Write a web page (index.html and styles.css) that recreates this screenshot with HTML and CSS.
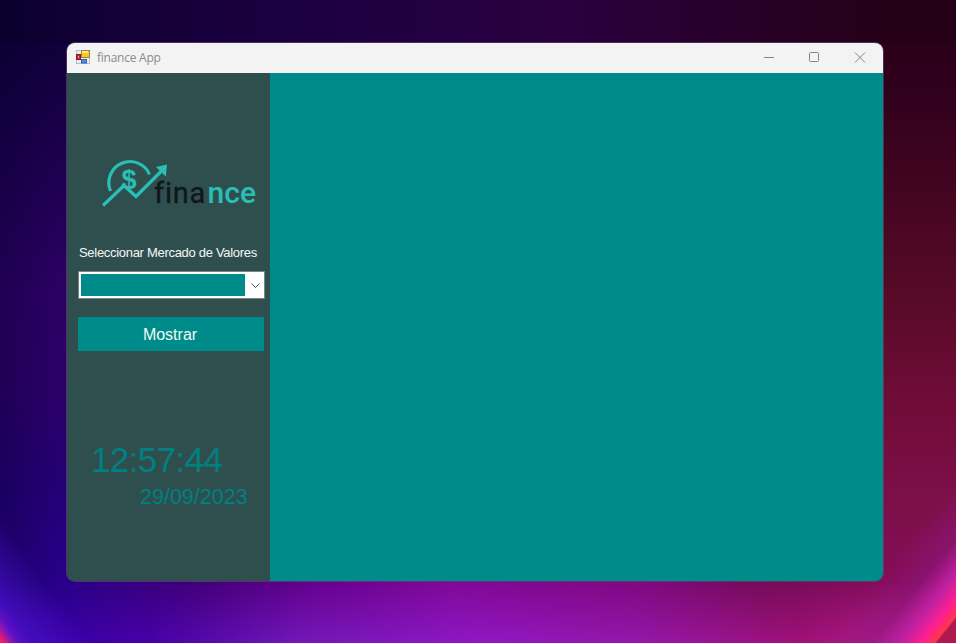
FILE: index.html
```html
<!DOCTYPE html>
<html lang="es">
<head>
<meta charset="utf-8">
<title>finance App</title>
<link rel="stylesheet" href="styles.css">
</head>
<body>
<div class="desktop">
  <main class="window">
    <header class="titlebar">
      <svg class="app-icon" width="14" height="14" viewBox="0 0 14 14">
        <rect x=".5" y=".5" width="13" height="13" fill="#e9edf4" stroke="#b8bfcc"/>
        <rect x="5.500" y=".5" width="8" height="7" fill="#f4c62f" stroke="#a9852b"/>
        <path d="M6 1h6v2H6z" fill="#ffe98b"/>
        <rect x=".5" y="4.500" width="4" height="5" fill="#c8282c" stroke="#8c1a20"/>
        <path d="M2 6h1v2H2z" fill="#f49a94"/>
        <rect x="5.500" y="9.500" width="5" height="3.500" fill="#4d8fe0" stroke="#3463b0"/>
      </svg>
      <h1 class="title">finance App</h1>
      <div class="controls">
        <svg width="46" height="30" viewBox="0 0 46 30"><path d="M19 14.500h10"/></svg>
        <svg width="46" height="30" viewBox="0 0 46 30"><rect x="18.500" y="9.500" width="9" height="9" rx="1"/></svg>
        <svg width="46" height="30" viewBox="0 0 46 30"><path d="M18 9.500l10 10M28 9.500l-10 10"/></svg>
      </div>
    </header>
    <div class="content">
      <aside class="sidebar">
        <svg class="logo" width="170" height="58" viewBox="0 0 170 58">
          <g fill="none" stroke="#2abfb4" stroke-width="3.200">
            <path d="M15.500 36A20.500 20.500 0 1 1 54.500 19.500"/>
            <path d="M8 50.500L29 30.500l12 11L68 14.500"/>
          </g>
          <path d="M61 12L72 9.500L70.800 21.500z" fill="#2abfb4"/>
          <text class="dollar" x="26.500" y="33.500">$</text>
          <text class="wordmark dark" x="59" y="47.500">fina</text>
          <text class="wordmark accent" x="112.500" y="47.500" textLength="48.500" lengthAdjust="spacingAndGlyphs">nce</text>
        </svg>
        <div class="label">Seleccionar Mercado de Valores</div>
        <div class="combo">
          <div class="combo-value"></div>
          <svg class="combo-arrow" width="18" height="22" viewBox="0 0 18 22"><path d="M6.500 9.500l4 4 4-4"/></svg>
        </div>
        <button class="show">Mostrar</button>
        <div class="time">12:57:44</div>
        <div class="date">29/09/2023</div>
      </aside>
      <section class="panel"></section>
    </div>
  </main>
</div>
</body>
</html>
```
FILE: styles.css
```css
* { box-sizing: border-box; }
body { margin: 0; font-family: "Liberation Sans", Arial, sans-serif; }
.desktop {
  position: relative;
  width: 956px;
  height: 643px;
  padding: 43px 73px 62px 67px;
  overflow: hidden;
  background:
    linear-gradient(90deg, rgba(0,0,40,.3), transparent 60px),
    linear-gradient(90deg, #280088 0, #280088 67px, #420078 200px, #680090 320px, #800898 450px, #800880 640px, #740c58 760px, #840c58 883px, #840c58) 0 100% / 100% 62px no-repeat,
    linear-gradient(90deg, #0c0030 0, #1c0040 300px, #2a0040 550px, #260016 900px) 0 0 / 100% 43px no-repeat,
    linear-gradient(#0c0030 0, #160044 100px, #2c0064 290px, #2c0068 390px, #240074 480px, #280088 580px) 0 0 / 300px 100% no-repeat,
    linear-gradient(#260016 0, #30001c 90px, #560a26 290px, #700c38 400px, #7c0f48 500px, #840c58 580px) 100% 0 / 656px 100% no-repeat;
}
/* Glow along the lower edge and in the lower corners of the wallpaper */
.desktop::before,
.desktop::after {
  content: "";
  position: absolute;
  left: 0;
  right: 0;
  bottom: 0;
}
.desktop::before {
  height: 62px;
  background: linear-gradient(90deg, #3c00a8 0, #3c00a8 67px, #4800a8 150px, #7218b8 300px, #9018c4 480px, #9418a8 640px, #a01078 800px, #b01c8c 883px);
  -webkit-mask-image: linear-gradient(transparent, #000);
  mask-image: linear-gradient(transparent, #000);
}
.desktop::after {
  height: 163px;
  background:
    linear-gradient(235deg, transparent 110px, rgba(72,16,200,.75) 158px, #5c10c4 168px, #9c18a8 175px, #f01868 180px, #ff2860 184px) 0 0 / 110px 163px no-repeat,
    linear-gradient(129deg, transparent 156px, rgba(144,24,130,.55) 193px, #c020a0 214px, #ff2090 231px, #ff3058 238px, #ff3850 241px, #b01850 243px) 100% 0 / 200px 163px no-repeat;
}
.window {
  position: relative;
  z-index: 1;
  height: 538px;
  display: flex;
  flex-direction: column;
  border-radius: 8px;
  overflow: hidden;
  box-shadow: 0 0 0 1px rgba(100,70,115,.65);
  background: #2f4f4f;
}
.titlebar {
  height: 30px;
  flex: none;
  display: flex;
  align-items: center;
  background: #f3f3f3;
  padding-left: 9px;
}
.app-icon { margin-top: -2px; }
.title {
  margin: -1px 0 0 7px;
  font: 12px "Open Sans", "Noto Sans", sans-serif;
  letter-spacing: -.25px;
  color: #8b8b8b;
}
.controls { display: flex; margin-left: auto; }
.controls svg { fill: none; stroke: #858585; stroke-width: 1; }
.content { display: flex; flex: 1; }
.sidebar {
  width: 203px;
  padding: 82px 0 0 11px;
  display: flex;
  flex-direction: column;
  align-items: flex-start;
  background: #2f4f4f;
}
.panel { flex: 1; background: #008b8b; }
.logo { margin-left: 17px; flex: none; }
.dollar { font: bold 27px "Liberation Sans", sans-serif; fill: #2abfb4; }
.wordmark {
  font: 29px Roboto, sans-serif;
  font-variant-ligatures: none;
}
.dark { letter-spacing: .8px; fill: #101718; stroke: #101718; stroke-width: .4; }
.accent { font-weight: 500; fill: #2abfb4; }
.label {
  margin: 32px 0 0 1px;
  font-size: 13px;
  line-height: 16px;
  letter-spacing: -.3px;
  color: #f4f7f7;
  white-space: nowrap;
}
.combo {
  display: flex;
  align-items: center;
  width: 187px;
  height: 28px;
  margin-top: 10px;
  padding: 2px;
  border: 1px solid #7b8585;
  background: #fff;
}
.combo-value { flex: none; width: 164px; height: 22px; background: #008b8b; }
.combo-arrow { flex: none; fill: none; stroke: #505050; stroke-width: 1; }
.show {
  width: 186px;
  height: 34px;
  margin-top: 18px;
  padding: 1px 2px 0 0;
  border: 0;
  background: #008b8b;
  color: #f0fafa;
  font: 16px "Liberation Sans", Arial, sans-serif;
}
.time {
  margin: 89px 0 0 13px;
  font-size: 35px;
  line-height: 40px;
  letter-spacing: -.6px;
  color: #008080;
}
.date {
  margin: 4px 0 0 62px;
  font-size: 21.500px;
  line-height: 26px;
  color: #008080;
}
```
